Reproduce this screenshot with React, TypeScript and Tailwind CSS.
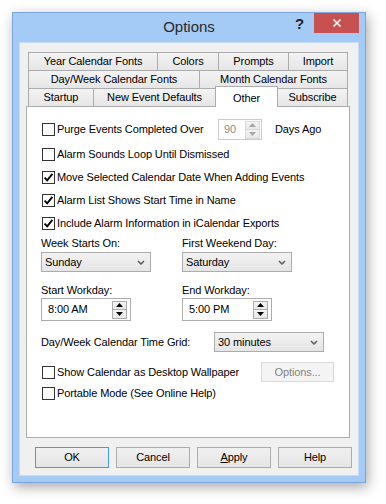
import React from "react";

const FONT = { fontFamily: '"Liberation Sans", Arial, sans-serif' };

function Check({ checked }: { checked?: boolean }) {
  return (
    <span className="ml-px flex h-[13px] w-[13px] shrink-0 items-center justify-center border border-[#333333] bg-white">
      {checked && (
        <svg width="11" height="11" viewBox="0 0 11 11">
          <path d="M1.6 5.6 L4.2 8.4 L9.4 1.8" fill="none" stroke="#000" strokeWidth="1.9" />
        </svg>
      )}
    </span>
  );
}

function CheckRow({ label, checked, className }: { label: string; checked?: boolean; className?: string }) {
  return (
    <div className={"flex items-center " + (className ?? "")}>
      <Check checked={checked} />
      <span className="ml-[2px] whitespace-nowrap">{label}</span>
    </div>
  );
}

function Chevron() {
  return (
    <svg width="8" height="5" viewBox="0 0 8 5">
      <polyline points="1,1 4,4 7,1" fill="none" stroke="#5a5a5a" strokeWidth="1.5" />
    </svg>
  );
}

function Dropdown({ value, className }: { value: string; className: string }) {
  return (
    <div
      className={
        "flex h-[20px] items-center justify-between border border-[#acacac] bg-gradient-to-b from-[#f2f2f2] to-[#e5e5e5] pl-[3px] pr-[5px] " +
        className
      }
    >
      <span>{value}</span>
      <Chevron />
    </div>
  );
}

function Spinner({ disabled }: { disabled?: boolean }) {
  const c = disabled ? "#a8a8a8" : "#000";
  return (
    <div
      className={
        "flex h-[18px] w-[15px] flex-col border " +
        (disabled ? "border-[#d9d9d9]" : "border-[#acacac]")
      }
    >
      <div className="flex flex-1 items-center justify-center bg-gradient-to-b from-[#f4f4f4] to-[#e8e8e8]">
        <svg width="7" height="4" viewBox="0 0 7 4">
          <polygon points="0,4 7,4 3.5,0" fill={c} />
        </svg>
      </div>
      <div
        className={
          "flex flex-1 items-center justify-center border-t bg-gradient-to-b from-[#f4f4f4] to-[#e8e8e8] " +
          (disabled ? "border-[#d9d9d9]" : "border-[#acacac]")
        }
      >
        <svg width="7" height="4" viewBox="0 0 7 4">
          <polygon points="0,0 7,0 3.5,4" fill={c} />
        </svg>
      </div>
    </div>
  );
}

function Tab({ label, className }: { label: string; className: string }) {
  return (
    <div
      className={
        "flex h-[18px] items-center justify-center border-t border-[#acacac] bg-gradient-to-b from-[#f3f3f3] to-[#e6e6e6] " +
        className
      }
    >
      {label}
    </div>
  );
}

function Btn({ children, def }: { children: React.ReactNode; def?: boolean }) {
  return (
    <div
      className={
        "flex h-[21px] w-[74px] items-center justify-center border bg-gradient-to-b from-[#f0f0f0] to-[#e5e5e5] " +
        (def ? "border-[#4a97e6]" : "border-[#acacac]")
      }
    >
      {children}
    </div>
  );
}

export default function App() {
  return (
    <div className="h-[504px] w-[386px] overflow-hidden bg-white pl-[12px] pt-[12px] text-[11px] tracking-[-0.1px] text-black" style={FONT}>
      <div className="flex h-[471px] w-[354px] flex-col border border-[#7aa6da] bg-[#a4cbf5] shadow-[2px_4px_12px_rgba(0,0,0,0.35)]">
        {/* title bar */}
        <div className="grid h-[29px] grid-cols-[1fr_auto_1fr]">
          <div />
          <div className="flex items-center text-[15px] tracking-normal text-[#2a2a2a]">Options</div>
          <div className="flex items-start justify-end pr-[6px]">
            <span className="mr-[10px] mt-[2px] text-[15px] font-bold leading-[18px] text-[#1e1e1e]">?</span>
            <div className="flex h-[20px] w-[45px] items-center justify-center bg-[#c75050]">
              <svg width="10" height="10" viewBox="0 0 10 10">
                <path d="M1.5 1.5 L8.5 8.5 M8.5 1.5 L1.5 8.5" stroke="#fff" strokeWidth="1.7" />
              </svg>
            </div>
          </div>
        </div>

        {/* client */}
        <div className="mx-[6px] flex h-[434px] flex-col border border-[#c7dcf3] bg-[#f0f0f0] px-[6px] pt-[9px]">
          {/* tabs */}
          <div className="mx-[2px] flex w-[320px] flex-col">
            <div className="flex">
              <Tab label="Year Calendar Fonts" className="w-[129px] border-l" />
              <Tab label="Colors" className="w-[61px] border-l" />
              <Tab label="Prompts" className="w-[70px] border-l" />
              <Tab label="Import" className="w-[60px] border-l border-r" />
            </div>
            <div className="flex">
              <Tab label="Day/Week Calendar Fonts" className="w-[171px] border-l" />
              <Tab label="Month Calendar Fonts" className="w-[149px] border-l border-r" />
            </div>
            <div className="flex h-[18px] items-start">
              <Tab label="Startup" className="w-[65px] border-l" />
              <Tab label="New Event Defaults" className="w-[122px] border-l" />
              <div className="relative z-10 -mt-[2px] flex h-[21px] w-[63px] items-start justify-center border-l border-r border-t border-[#acacac] bg-white pt-[3px]">
                Other
              </div>
              <Tab label="Subscribe" className="w-[70px] border-r" />
            </div>
          </div>

          {/* panel */}
          <div className="flex h-[332px] w-[324px] flex-col border border-[#acacac] bg-white pl-[14px] pt-[12px]">
            <div className="flex h-[21px] items-center">
              <CheckRow label="Purge Events Completed Over" className="w-[177px]" />
              <div className="flex h-[21px] w-[44px] items-center justify-between border border-[#cccccc] bg-white pl-[5px] pr-px text-[#8c8c8c]">
                <span>90</span>
                <Spinner disabled />
              </div>
              <span className="ml-[13px]">Days Ago</span>
            </div>
            <CheckRow label="Alarm Sounds Loop Until Dismissed" className="mt-[3px] h-[23px]" />
            <CheckRow label="Move Selected Calendar Date When Adding Events" checked className="h-[23px]" />
            <CheckRow label="Alarm List Shows Start Time in Name" checked className="h-[23px]" />
            <CheckRow label="Include Alarm Information in iCalendar Exports" checked className="h-[23px]" />

            <div className="mt-[1px] flex h-[14px] items-center">
              <span className="w-[141px]">Week Starts On:</span>
              <span>First Weekend Day:</span>
            </div>
            <div className="mt-[2px] flex">
              <Dropdown value="Sunday" className="mr-[31px] w-[110px]" />
              <Dropdown value="Saturday" className="w-[110px]" />
            </div>

            <div className="mt-[11px] flex h-[14px] items-center">
              <span className="w-[141px]">Start Workday:</span>
              <span>End Workday:</span>
            </div>
            <div className="mt-[1px] flex">
              <div className="mr-[51px] flex h-[23px] w-[90px] items-center justify-between border border-[#acacac] bg-white pl-[6px] pr-[3px]">
                <span>8:00 AM</span>
                <Spinner />
              </div>
              <div className="flex h-[23px] w-[90px] items-center justify-between border border-[#acacac] bg-white pl-[6px] pr-[3px]">
                <span>5:00 PM</span>
                <Spinner />
              </div>
            </div>

            <div className="mt-[11px] flex h-[20px] items-center">
              <span className="w-[173px]">Day/Week Calendar Time Grid:</span>
              <Dropdown value="30 minutes" className="w-[110px]" />
            </div>

            <div className="mt-[10px] flex h-[20px] items-center">
              <CheckRow label="Show Calendar as Desktop Wallpaper" className="w-[220px]" />
              <div className="flex h-[20px] w-[73px] items-center justify-center border border-[#d9d9d9] bg-[#f4f4f4] text-[#838383]">
                Options...
              </div>
            </div>
            <CheckRow label="Portable Mode (See Online Help)" className="h-[23px]" />
          </div>

          {/* buttons */}
          <div className="ml-[9px] mt-[9px] flex gap-[7px]">
            <Btn def>OK</Btn>
            <Btn>Cancel</Btn>
            <Btn>
              <span>
                <span className="underline">A</span>pply
              </span>
            </Btn>
            <Btn>Help</Btn>
          </div>
        </div>
      </div>
    </div>
  );
}
